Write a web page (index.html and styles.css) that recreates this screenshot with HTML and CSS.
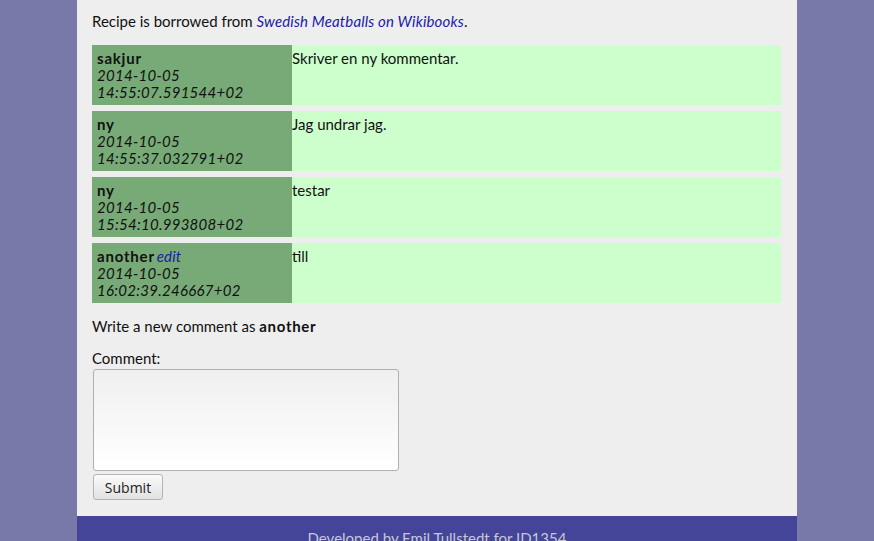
FILE: index.html
```html
<!DOCTYPE html>
<html>
<head>
<meta charset="utf-8">
<link rel="stylesheet" href="styles.css">
</head>
<body>
<div class="page">
  <main class="content">
    <p class="source">Recipe is borrowed from <a href="#">Swedish Meatballs on Wikibooks</a>.</p>
    <div class="comments">
      <div class="comment">
        <div class="author"><b>sakjur</b><br><i>2014-10-05<br>14:55:07.591544+02</i></div>
        <div class="text">Skriver en ny kommentar.</div>
      </div>
      <div class="comment">
        <div class="author"><b>ny</b><br><i>2014-10-05<br>14:55:37.032791+02</i></div>
        <div class="text">Jag undrar jag.</div>
      </div>
      <div class="comment">
        <div class="author"><b>ny</b><br><i>2014-10-05<br>15:54:10.993808+02</i></div>
        <div class="text">testar</div>
      </div>
      <div class="comment">
        <div class="author"><b>another</b><a href="#" class="edit">edit</a><br><i>2014-10-05<br>16:02:39.246667+02</i></div>
        <div class="text">till</div>
      </div>
    </div>
    <p class="write">Write a new comment as <b>another</b></p>
    <form class="form">
      <label class="label">Comment:</label>
      <textarea class="area"></textarea>
      <button type="button" class="submit">Submit</button>
    </form>
  </main>
  <footer class="footer">Developed by Emil Tullstedt for ID1354</footer>
</div>
</body>
</html>
```
FILE: styles.css
```css
html, body {
  margin: 0;
  padding: 0;
}
body {
  background: #7878a9;
  font-family: Lato, "Open Sans", sans-serif;
  font-size: 15px;
  color: #111;
}
.page {
  width: 720px;
  margin: 0 auto;
  background: #eeeeee;
  height: 541px;
  overflow: hidden;
  display: flex;
  flex-direction: column;
}
.content {
  padding: 11px 16px 12px 15px;
}
.source {
  margin: 0;
  line-height: 20px;
}
.source a, .edit {
  color: #1a1aaa;
  font-style: italic;
  text-decoration: none;
  letter-spacing: 0.15px;
}
.edit {
  margin-left: 2px;
}
.comments {
  margin-top: 14px;
  display: flex;
  flex-direction: column;
  gap: 6px;
}
.comment {
  display: flex;
  height: 60px;
  background: #ccffcc;
}
.author {
  width: 200px;
  box-sizing: border-box;
  padding: 5px 5px;
  background: #77aa77;
  line-height: 17px;
}
.author b {
  letter-spacing: 0.8px;
}
.author i {
  letter-spacing: 0.28px;
}
.text {
  padding-top: 5px;
  line-height: 17px;
}
.write {
  margin: 13px 0 0;
  line-height: 20px;
}
.write b {
  letter-spacing: 0.7px;
}
.form {
  margin-top: 14px;
  display: flex;
  flex-direction: column;
  align-items: flex-start;
}
.label {
  line-height: 17px;
}
.area {
  margin: 2px 0 0 1px;
  width: 306px;
  height: 102px;
  box-sizing: border-box;
  border: 1px solid #b0b0b0;
  border-radius: 3px;
  background: linear-gradient(#efefef, #ffffff);
  resize: none;
}
.submit {
  margin: 3px 0 0 1px;
  width: 70px;
  height: 26px;
  border: 1px solid #b4b4b4;
  border-radius: 3px;
  background: linear-gradient(#fafafa, #e2e2e2);
  font-family: "Open Sans", "DejaVu Sans", sans-serif;
  font-size: 14px;
  color: #222;
  padding: 0;
}
.footer {
  margin-top: auto;
  flex-shrink: 0;
  background: #444499;
  color: #c8c8d8;
  text-align: center;
  height: 25px;
  line-height: 44px;
  font-size: 15px;
}
```
